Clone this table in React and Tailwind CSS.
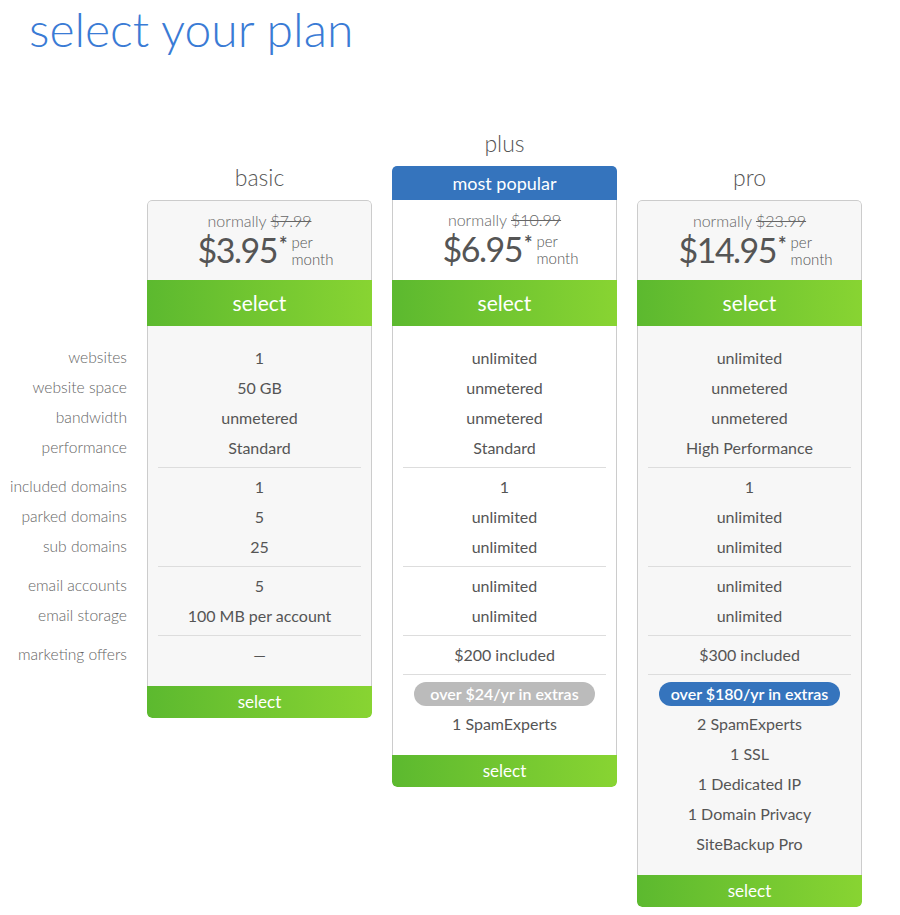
import React from "react";

const FONT = { fontFamily: "Lato, 'Open Sans', sans-serif" };

const labels = [
  ["websites", "website space", "bandwidth", "performance"],
  ["included domains", "parked domains", "sub domains"],
  ["email accounts", "email storage"],
  ["marketing offers"],
];

const plans = [
  {
    name: "basic",
    normally: "$7.99",
    price: "$3.95",
    bg: "bg-[#f7f7f7]",
    popular: false,
    groups: [
      ["1", "50 GB", "unmetered", "Standard"],
      ["1", "5", "25"],
      ["5", "100 MB per account"],
      ["—"],
    ],
    pill: null,
    extras: [],
  },
  {
    name: "plus",
    normally: "$10.99",
    price: "$6.95",
    bg: "bg-white",
    popular: true,
    groups: [
      ["unlimited", "unmetered", "unmetered", "Standard"],
      ["1", "unlimited", "unlimited"],
      ["unlimited", "unlimited"],
      ["$200 included"],
    ],
    pill: { text: "over $24/yr in extras", cls: "bg-[#bbbbbb]" },
    extras: ["1 SpamExperts"],
  },
  {
    name: "pro",
    normally: "$23.99",
    price: "$14.95",
    bg: "bg-[#f7f7f7]",
    popular: false,
    groups: [
      ["unlimited", "unmetered", "unmetered", "High Performance"],
      ["1", "unlimited", "unlimited"],
      ["unlimited", "unlimited"],
      ["$300 included"],
    ],
    pill: { text: "over $180/yr in extras", cls: "bg-[#3574bd]" },
    extras: ["2 SpamExperts", "1 SSL", "1 Dedicated IP", "1 Domain Privacy", "SiteBackup Pro"],
  },
];

function Divider({ hidden }) {
  return <div className={"my-1 mx-[10px] h-px " + (hidden ? "" : "bg-[#dddddd]")} />;
}

function Row({ children, cls }) {
  return <div className={"h-[30px] flex items-center " + cls}>{children}</div>;
}

function Card({ plan }) {
  return (
    <div className="w-[225px] flex flex-col">
      <div className="text-center text-[23px] leading-[34px] font-light text-[#555] mb-[6px]">
        {plan.name}
      </div>
      <div className="rounded-[5px] overflow-hidden flex flex-col">
        {plan.popular && (
          <div className="h-[34px] bg-[#3574bd] text-white text-[18px] flex items-center justify-center rounded-t-[4px]">
            most popular
          </div>
        )}
        <div
          className={
            "h-[80px] border-x border-[#cccccc] flex flex-col items-center pt-[10px] " +
            plan.bg +
            (plan.popular ? "" : " border-t rounded-t-[5px]")
          }
        >
          <div className="text-[16px] leading-[20px] text-[#666] font-light">
            normally <span className="line-through">{plan.normally}</span>
          </div>
          <div className="flex items-start text-[#555] pl-[12px]">
            <span className="text-[34px] leading-[38px] tracking-[-1.5px] pr-[2px]">{plan.price}</span>
            <span className="text-[20px] leading-[14px] font-bold mt-[6px]">*</span>
            <span className="ml-[4px] mt-[3px] text-[15px] leading-[17px] font-light flex flex-col">
              <span>per</span>
              <span>month</span>
            </span>
          </div>
        </div>
        <div className="h-[46px] bg-gradient-to-r from-[#5cb92f] to-[#88d432] text-white text-[21px] flex items-center justify-center">
          select
        </div>
        <div className={"border-x border-[#cccccc] pt-[17px] pb-4 " + plan.bg}>
          {plan.groups.map((g, i) => (
            <div key={i}>
              {i > 0 && <Divider />}
              {g.map((v, j) => (
                <Row key={j} cls="justify-center text-[16px] text-[#555]">
                  {v}
                </Row>
              ))}
            </div>
          ))}
          {plan.pill && (
            <>
              <Divider />
              <Row cls="px-[21px]">
                <div
                  className={
                    "w-full h-[24px] rounded-full text-white text-[16px] font-semibold flex items-center justify-center " +
                    plan.pill.cls
                  }
                >
                  {plan.pill.text}
                </div>
              </Row>
              {plan.extras.map((v, j) => (
                <Row key={j} cls="justify-center text-[16px] text-[#555]">
                  {v}
                </Row>
              ))}
            </>
          )}
        </div>
        <div className="h-[32px] bg-gradient-to-r from-[#5cb92f] to-[#88d432] text-white text-[17px] flex items-center justify-center rounded-b-[5px]">
          select
        </div>
      </div>
    </div>
  );
}

export default function App() {
  return (
    <div className="w-[900px] h-[915px] bg-white overflow-hidden" style={FONT}>
      <h1 className="pl-[29px] pt-[2px] h-[126px] text-[48px] leading-[54px] font-light text-[#3a7bd5]">
        select your plan
      </h1>
      <div className="flex gap-[20px]">
        <div className="w-[127px] pt-[217px] text-right text-[15.6px] text-[#666] font-light">
          {labels.map((g, i) => (
            <div key={i}>
              {i > 0 && <Divider hidden />}
              {g.map((l, j) => (
                <Row key={j} cls="justify-end whitespace-nowrap">
                  {l}
                </Row>
              ))}
            </div>
          ))}
        </div>
        <div className="pt-[34px]">
          <Card plan={plans[0]} />
        </div>
        <div>
          <Card plan={plans[1]} />
        </div>
        <div className="pt-[34px]">
          <Card plan={plans[2]} />
        </div>
      </div>
    </div>
  );
}
